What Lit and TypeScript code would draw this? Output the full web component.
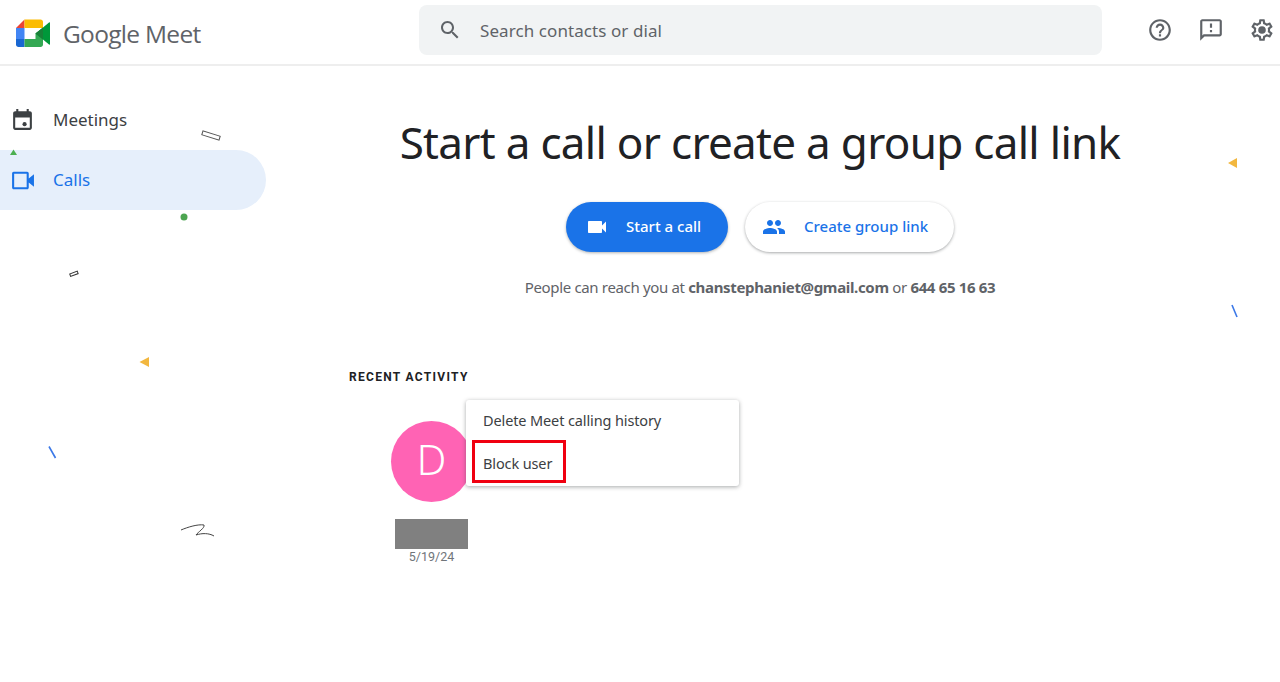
import { LitElement, html, css, svg } from "lit";
import { customElement } from "lit/decorators.js";

const confetti = svg`
  <rect x="202" y="133.5" width="18" height="4" transform="rotate(17 211 135.5)" fill="#fff" stroke="#555" stroke-width="1"/>
  <path d="M13.5 149.5 L17 155 H10 Z" fill="#4caf50"/>
  <circle cx="184" cy="217" r="3.5" fill="#4da551"/>
  <rect x="70" y="272.5" width="8" height="2.6" transform="rotate(-20 74 274)" fill="#fff" stroke="#333" stroke-width="1"/>
  <path d="M149 357 V367 L139.500 362 Z" fill="#f2b73f"/>
  <path d="M49 446.500 L55.500 458" stroke="#3b78e7" stroke-width="1.600" fill="none"/>
  <path d="M181 530 C188 527 198 524 204 525 C205 528 198 532 196 535 C202 533 209 533 214 536" stroke="#444" stroke-width="1" fill="none"/>
  <path d="M1237 158 V168 L1228 163 Z" fill="#f2b73f"/>
  <path d="M1232 305 L1237 317" stroke="#3b78e7" stroke-width="1.600" fill="none"/>
`;

@customElement("app-root")
export class AppRoot extends LitElement {
  static styles = css`
    :host {
      display: block;
      position: relative;
      width: 1280px;
      height: 682px;
      overflow: hidden;
      background: #fff;
      font-family: "Roboto", "Liberation Sans", sans-serif;
      color: #202124;
    }
    .confetti {
      position: absolute;
      inset: 0;
      width: 1280px;
      height: 682px;
      pointer-events: none;
      z-index: 2;
    }
    header {
      height: 60px;
      padding-bottom: 4px;
      border-bottom: 2px solid #eeeeee;
      display: flex;
      align-items: center;
      box-sizing: content-box;
    }
    .brand {
      width: 419px;
      display: flex;
      align-items: center;
      padding: 6px 0 0 16px;
      box-sizing: border-box;
      gap: 13px;
    }
    .brand svg { width: 34px; height: 28px; display: block; }
    .brand span {
      font-family: "Open Sans", sans-serif;
      font-size: 24.500px;
      letter-spacing: -0.700px;
      color: #5f6368;
    }
    .search {
      width: 683px;
      height: 50px;
      background: #f1f3f4;
      border-radius: 8px;
      display: flex;
      align-items: center;
      padding-left: 19px;
      box-sizing: border-box;
      gap: 18px;
      color: #5f6368;
      font-size: 17px;
      letter-spacing: 0.080px;
      font-family: "Noto Sans", sans-serif;
    }
    .search svg { width: 24px; height: 24px; fill: #5f6368; }
    .tools {
      flex: 1;
      display: flex;
      justify-content: flex-end;
      gap: 25px;
      padding-right: 5px;
    }
    .tools svg { width: 26px; height: 26px; fill: #5f6368; display: block; }
    .body { display: flex; height: 616px; }
    nav {
      width: 266px;
      flex: none;
      padding-top: 24px;
      box-sizing: border-box;
    }
    .nav-item {
      height: 60px;
      display: flex;
      align-items: center;
      padding-left: 10px;
      gap: 18px;
      font-size: 17px;
      font-family: "Noto Sans", sans-serif;
      color: #3c4043;
      border-radius: 0 30px 30px 0;
    }
    .nav-item span { padding-bottom: 2px; }
    .nav-item svg { width: 25px; height: 25px; fill: #3c4043; flex: none; }
    .nav-item.active { background: #e6effb; color: #1a73e8; }
    .nav-item.active svg { fill: #1a73e8; }
    main {
      flex: 1;
      padding-right: 26px;
      display: flex;
      flex-direction: column;
      align-items: center;
      position: relative;
    }
    h1 {
      margin: 43px 0 0;
      font-family: "Noto Sans", sans-serif;
      font-weight: 400;
      font-size: 44px;
      line-height: 66px;
      color: #202124;
      white-space: nowrap;
      letter-spacing: -0.700px;
    }
    .actions {
      display: flex;
      gap: 17px;
      margin-top: 27px;
    }
    .btn {
      height: 50px;
      border-radius: 25px;
      display: flex;
      align-items: center;
      box-sizing: border-box;
      font-size: 15px;
      font-family: "Noto Sans", sans-serif;
      font-weight: 500;
    }
    .btn span { padding-bottom: 2px; }
    .btn svg { width: 24px; height: 24px; }
    .primary {
      width: 162px;
      background: #1a73e8;
      color: #fff;
      padding-left: 19px;
      gap: 17px;
      box-shadow: 0 1px 3px rgba(60, 64, 67, 0.4);
    }
    .primary svg { fill: #fff; }
    .secondary {
      width: 209px;
      background: #fff;
      color: #1a73e8;
      padding-left: 17px;
      gap: 18px;
      box-shadow: 0 1px 3px rgba(60, 64, 67, 0.45);
    }
    .secondary svg { fill: #1a73e8; }
    .reach {
      margin-top: 24px;
      font-size: 15px;
      line-height: 22px;
      color: #5f6368;
      font-family: "Noto Sans", sans-serif;
      letter-spacing: -0.340px;
      white-space: nowrap;
    }
    .reach b { font-weight: 700; }
    .recent {
      align-self: flex-start;
      margin: 71px 0 0 83px;
      font-size: 12px;
      line-height: 16px;
      font-weight: 700;
      letter-spacing: 1.300px;
      color: #202124;
    }
    .contact {
      align-self: flex-start;
      margin: 36px 0 0 125px;
      width: 81px;
      display: flex;
      flex-direction: column;
      align-items: center;
      position: relative;
    }
    .avatar {
      width: 81px;
      height: 81px;
      border-radius: 50%;
      background: #ff63b4;
      color: #fff;
      font-size: 42px;
      font-weight: 300;
      display: flex;
      align-items: center;
      justify-content: center;
      box-sizing: border-box;
      padding-bottom: 6px;
      font-family: "Noto Sans", sans-serif;
    }
    .redact {
      width: 73px;
      height: 30px;
      background: #808080;
      margin-top: 17px;
    }
    .date {
      font-size: 12.500px;
      line-height: 15px;
      color: #70757a;
    }
    .menu {
      position: absolute;
      left: 75px;
      top: -21px;
      width: 273px;
      height: 86px;
      background: #fff;
      border-radius: 3px;
      box-shadow: 0 1px 4px rgba(60, 64, 67, 0.45);
      display: flex;
      flex-direction: column;
      z-index: 3;
    }
    .menu div {
      height: 43px;
      display: flex;
      align-items: center;
      box-sizing: border-box;
      padding: 0 0 4px 17px;
      font-size: 14.500px;
      letter-spacing: -0.120px;
      font-family: "Noto Sans", sans-serif;
      color: #3c4043;
    }
    .highlight {
      position: absolute;
      left: 6px;
      top: 40px;
      width: 94px;
      height: 43px;
      box-sizing: border-box;
      border: 3px solid #f00010;
    }
  `;

  render() {
    return html`
      <header>
        <div class="brand">
          <svg viewBox="0 0 34 28">
            <path d="M0 9 L8.500 0.500 V9 Z" fill="#ea4335"/>
            <path d="M0 9 H8.500 V20 H0 Z" fill="#4285f4"/>
            <path d="M0 20 H8.500 V28 H2.500 C1 28 0 27 0 25.500 Z" fill="#1967d2"/>
            <path d="M8.500 0.500 H24.500 C26 0.500 27 1.500 27 3 V9 H19.500 H8.500 Z" fill="#fbbc04"/>
            <path d="M8.500 20 H19.500 V14.500 L27 9 V25.500 C27 27 26 28 24.500 28 H8.500 Z" fill="#34a853"/>
            <path d="M19.500 14.500 L27 8.500 L33 3.500 C33.600 3 34 3.300 34 4 V25 C34 25.800 33.500 26 33 25.500 L27 20.500 Z" fill="#00983a"/>
            <path d="M19.500 14.500 L27 8.500 V20.500 Z" fill="#188038"/>
          </svg>
          <span>Google Meet</span>
        </div>
        <div class="search">
          <svg viewBox="0 0 24 24"><path d="M15.500 14h-.79l-.28-.27C15.410 12.590 16 11.110 16 9.500 16 5.910 13.090 3 9.500 3S3 5.910 3 9.500 5.910 16 9.500 16c1.610 0 3.090-.59 4.230-1.570l.27.28v.79l5 4.990L20.490 19l-4.990-5zm-6 0C7.010 14 5 11.990 5 9.500S7.010 5 9.500 5 14 7.010 14 9.500 11.990 14 9.500 14z"/></svg>
          <span>Search contacts or dial</span>
        </div>
        <div class="tools">
          <svg viewBox="0 0 24 24"><path d="M11 18h2v-2h-2v2zm1-16C6.480 2 2 6.480 2 12s4.480 10 10 10 10-4.480 10-10S17.520 2 12 2zm0 18c-4.410 0-8-3.590-8-8s3.590-8 8-8 8 3.590 8 8-3.590 8-8 8zm0-14c-2.210 0-4 1.790-4 4h2c0-1.100.9-2 2-2s2 .9 2 2c0 2-3 1.750-3 5h2c0-2.250 3-2.500 3-5 0-2.210-1.790-4-4-4z"/></svg>
          <svg viewBox="0 0 24 24"><path d="M20 2H4c-1.100 0-2 .9-2 2v18l4-4h14c1.100 0 2-.9 2-2V4c0-1.100-.9-2-2-2zm0 14H5.170L4 17.170V4h16v12zM11 12h2v2h-2zm0-6h2v4h-2z"/></svg>
          <svg viewBox="0 0 24 24"><path fill-rule="evenodd" d="M19.430 12.980c.04-.32.070-.64.070-.98s-.03-.66-.07-.98l2.110-1.650c.19-.15.240-.42.120-.64l-2-3.460c-.12-.22-.39-.3-.61-.22l-2.490 1c-.52-.4-1.080-.73-1.690-.98l-.38-2.650C14.460 2.180 14.250 2 14 2h-4c-.25 0-.46.180-.49.420l-.38 2.650c-.61.250-1.170.59-1.690.98l-2.490-1c-.23-.09-.49 0-.61.220l-2 3.460c-.13.220-.07.490.12.640l2.110 1.650c-.04.320-.07.650-.07.980s.03.660.07.980l-2.110 1.650c-.19.150-.24.420-.12.640l2 3.460c.12.220.39.300.61.220l2.490-1c.52.400 1.080.730 1.690.980l.38 2.650c.03.240.24.420.49.420h4c.25 0 .46-.18.49-.42l.38-2.650c.61-.25 1.170-.59 1.690-.98l2.490 1c.23.090.49 0 .61-.22l2-3.460c.12-.22.070-.49-.12-.64l-2.110-1.650zM17.450 11.270c.04.310.05.520.05.730s-.02.430-.05.730l-.14 1.130.89.700 1.080.84-.7 1.210-1.270-.51-1.040-.42-.9.680c-.43.320-.84.560-1.250.73l-1.060.43-.16 1.130-.2 1.350h-1.400l-.19-1.350-.16-1.130-1.060-.43c-.43-.18-.83-.41-1.230-.71l-.91-.7-1.060.43-1.270.51-.7-1.210 1.080-.84.890-.7-.14-1.130C6.520 12.430 6.500 12.200 6.500 12s.02-.43.05-.73l.14-1.130-.89-.7-1.080-.84.700-1.210 1.270.51 1.040.42.900-.68c.43-.32.840-.56 1.250-.73l1.060-.43.160-1.130.2-1.350h1.390l.19 1.350.16 1.130 1.060.43c.43.180.83.410 1.230.71l.91.700 1.060-.43 1.270-.51.700 1.210-1.070.85-.89.700.14 1.130z"/><circle cx="12" cy="12" r="3.500"/></svg>
        </div>
      </header>
      <div class="body">
        <nav>
          <div class="nav-item">
            <svg viewBox="0 0 24 24"><path d="M19 3h-1V1h-2v2H8V1H6v2H5c-1.110 0-2 .9-2 2v14c0 1.100.89 2 2 2h14c1.100 0 2-.9 2-2V5c0-1.100-.9-2-2-2zm0 16H5V9h14v10z"/><circle cx="14" cy="15.500" r="2"/></svg>
            <span>Meetings</span>
          </div>
          <div class="nav-item active">
            <svg viewBox="0 0 24 24"><path d="M18 10V5c0-.8-.7-1.500-1.500-1.500h-13C2.700 3.500 2 4.200 2 5v14c0 .8.7 1.500 1.500 1.500h13c.8 0 1.500-.7 1.500-1.500v-5l5 4V6l-5 4zM16 18.500H4v-13h12v13z"/></svg>
            <span>Calls</span>
          </div>
        </nav>
        <main>
          <h1>Start a call or create a group call link</h1>
          <div class="actions">
            <div class="btn primary">
              <svg viewBox="0 0 24 24"><path d="M17 10.500V7c0-.55-.45-1-1-1H4c-.55 0-1 .45-1 1v10c0 .55.45 1 1 1h12c.55 0 1-.45 1-1v-3.500l4 4v-11l-4 4z"/></svg>
              <span>Start a call</span>
            </div>
            <div class="btn secondary">
              <svg viewBox="0 0 24 24"><path d="M16 11c1.660 0 2.990-1.340 2.990-3S17.660 5 16 5s-3 1.340-3 3 1.340 3 3 3zm-8 0c1.660 0 2.990-1.340 2.990-3S9.660 5 8 5 5 6.340 5 8s1.340 3 3 3zm0 2c-2.330 0-7 1.170-7 3.500V19h14v-2.500C15 14.170 10.330 13 8 13zm8 0c-.29 0-.62.020-.97.050 1.160.84 1.970 1.970 1.970 3.450V19h6v-2.500c0-2.330-4.670-3.500-7-3.500z"/></svg>
              <span>Create group link</span>
            </div>
          </div>
          <div class="reach">People can reach you at <b>chanstephaniet@gmail.com</b> or <b>644 65 16 63</b></div>
          <div class="recent">RECENT ACTIVITY</div>
          <div class="contact">
            <div class="avatar">D</div>
            <div class="redact"></div>
            <div class="date">5/19/24</div>
            <div class="menu">
              <div>Delete Meet calling history</div>
              <div>Block user</div>
              <span class="highlight"></span>
            </div>
          </div>
        </main>
      </div>
      <svg class="confetti" viewBox="0 0 1280 682">${confetti}</svg>
    `;
  }
}
